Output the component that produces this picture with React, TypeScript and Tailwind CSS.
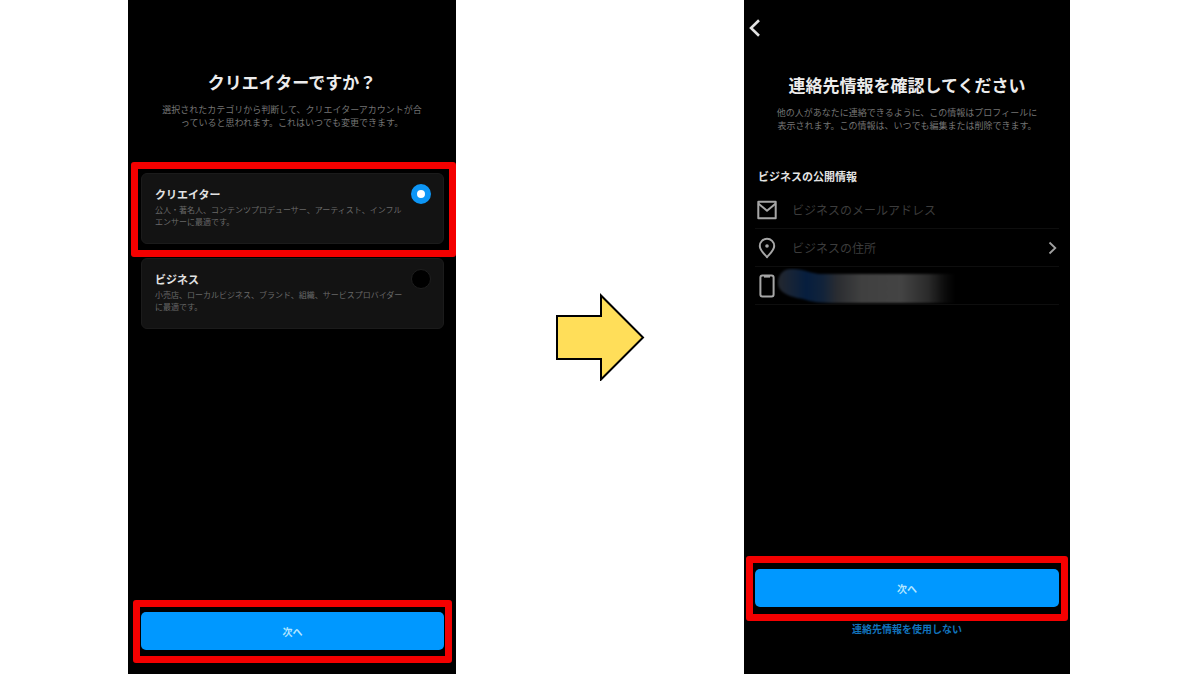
import { useState } from "react";
import type { ReactNode } from "react";

const accountTypes = [
  {
    id: "creator",
    title: "クリエイター",
    lines: ["公人・著名人、コンテンツプロデューサー、アーティスト、インフル", "エンサーに最適です。"],
  },
  {
    id: "business",
    title: "ビジネス",
    lines: ["小売店、ローカルビジネス、ブランド、組織、サービスプロバイダー", "に最適です。"],
  },
];

function Heading({ title, lines }: { title: string; lines: string[] }) {
  return (
    <header className="text-center whitespace-nowrap">
      <h1 className="text-[17px] leading-6 font-bold text-[#ececec]">{title}</h1>
      <p className="mt-[9px] text-[9px] leading-[13px] text-[#747474]">
        {lines[0]}
        <br />
        {lines[1]}
      </p>
    </header>
  );
}

function NextButton() {
  return (
    <button
      type="button"
      className="block h-[38px] w-full rounded-[5px] bg-[#0098ff] text-[10px] font-bold text-[#b4e6ff]"
    >
      次へ
    </button>
  );
}

type AccountOptionProps = {
  id: string;
  title: string;
  lines: string[];
  checked: boolean;
  onSelect: () => void;
};

function AccountOption({ id, title, lines, checked, onSelect }: AccountOptionProps) {
  return (
    <label
      htmlFor={id}
      className="flex items-start justify-between rounded-md border border-[#1b1b1b] bg-[#131313] pt-2.5 pr-3 pb-[15px] pl-[13px]"
    >
      <span className="pt-0.5 whitespace-nowrap">
        <span className="block text-[11px] leading-4 font-bold text-[#e2e2e2]">{title}</span>
        <span className="mt-0.5 block text-[8px] leading-3 text-[#696969]">
          {lines[0]}
          <br />
          {lines[1]}
        </span>
      </span>
      <input
        id={id}
        type="radio"
        name="account"
        checked={checked}
        onChange={onSelect}
        className="size-5 shrink-0 appearance-none rounded-full border border-[#1e1e1e] bg-black checked:border-[6px] checked:border-[#0d96f6] checked:bg-white"
      />
    </label>
  );
}

function AccountScreen() {
  const [selected, setSelected] = useState("creator");
  const [creator, business] = accountTypes;

  return (
    <section className="flex flex-col bg-black pt-[70px] pb-[11px]">
      <Heading
        title="クリエイターですか？"
        lines={[
          "選択されたカテゴリから判断して、クリエイターアカウントが合",
          "っていると思われます。これはいつでも変更できます。",
        ]}
      />
      <div className="mt-[33px] ml-[3px] rounded-[3px] border-[7px] border-[#f40000] pt-1 pr-[5px] pb-1.5 pl-[3px]">
        <AccountOption
          {...creator}
          checked={selected === creator.id}
          onSelect={() => setSelected(creator.id)}
        />
      </div>
      <div className="mt-px mr-3 ml-[13px]">
        <AccountOption
          {...business}
          checked={selected === business.id}
          onSelect={() => setSelected(business.id)}
        />
      </div>
      <div className="mt-auto mr-1 ml-[5px] rounded-[3px] border-[7px] border-[#f40000] px-px pt-[5px] pb-1.5">
        <NextButton />
      </div>
    </section>
  );
}

function InfoRow({ icon, children }: { icon: ReactNode; children: ReactNode }) {
  return (
    <li className="flex h-[38px] items-center border-b border-[#0e0e0e] pl-0.5">
      <svg
        viewBox="0 0 20 24"
        className="h-6 w-5 shrink-0"
        fill="none"
        stroke="#a6a6a6"
        strokeWidth="2"
        strokeLinejoin="round"
        aria-hidden="true"
      >
        {icon}
      </svg>
      {children}
    </li>
  );
}

// phone number hidden under a soft brush stroke
function HiddenNumber() {
  return (
    <svg viewBox="0 0 184 36" className="h-9 w-[184px]" role="img" aria-label="電話番号">
      <defs>
        <linearGradient id="brush" x1="0" x2="184" y1="0" y2="0" gradientUnits="userSpaceOnUse">
          <stop offset="0" stopColor="#24272d" />
          <stop offset="0.07" stopColor="#182436" />
          <stop offset="0.16" stopColor="#061e3e" />
          <stop offset="0.25" stopColor="#12233a" />
          <stop offset="0.33" stopColor="#2b2d31" />
          <stop offset="0.46" stopColor="#404040" />
          <stop offset="0.67" stopColor="#444444" />
          <stop offset="0.82" stopColor="#2b2b2b" />
          <stop offset="0.91" stopColor="#0c0c0c" />
          <stop offset="0.97" stopColor="#000000" />
        </linearGradient>
        <filter id="soft" x="-5%" y="-15%" width="110%" height="130%" colorInterpolationFilters="sRGB">
          <feGaussianBlur stdDeviation="1" />
        </filter>
      </defs>
      <path
        d="M14 1C25 0 33 6 46 6H184V35H60C42 35 35 34 26 31C14 29 1 25 1 15C1 7 6 1 14 1Z"
        fill="url(#brush)"
        filter="url(#soft)"
      />
    </svg>
  );
}

function ContactScreen() {
  return (
    <section className="flex flex-col bg-black pt-[19px] pb-[37px]">
      <button type="button" aria-label="戻る" className="ml-[5px] w-[11px]">
        <svg viewBox="0 0 11 18" className="block h-[18px] w-[11px]" fill="none" stroke="#e2e2e2" strokeWidth="2.6">
          <path d="M10 1.2L2 9L10 16.8" />
        </svg>
      </button>
      <div className="mt-9">
        <Heading
          title="連絡先情報を確認してください"
          lines={[
            "他の人があなたに連絡できるように、この情報はプロフィールに",
            "表示されます。この情報は、いつでも編集または削除できます。",
          ]}
        />
      </div>
      <h2 className="mt-9 ml-3.5 text-[11px] leading-4 font-bold text-[#e4e4e4]">
        ビジネスの公開情報
      </h2>
      <ul className="mx-[11px] mt-[7px]">
        <InfoRow
          icon={
            <>
              <path d="M1.3 3.8H18.7V20.2H1.3Z" />
              <path d="M1.3 5.5L10 12.7L18.7 5.5" />
            </>
          }
        >
          <input
            type="email"
            aria-label="ビジネスのメールアドレス"
            placeholder="ビジネスのメールアドレス"
            className="ml-[15px] min-w-0 flex-1 bg-transparent text-xs text-[#a6a6a6] outline-none placeholder:text-[#3c3c3c]"
          />
        </InfoRow>
        <InfoRow
          icon={
            <>
              <path d="M10 21.2C8.6 19 2.8 14.6 2.8 10A7.2 7.2 0 0 1 17.2 10C17.2 14.6 11.4 19 10 21.2Z" />
              <circle cx="10" cy="10" r="1.8" fill="#a6a6a6" stroke="none" />
            </>
          }
        >
          <button type="button" className="ml-[15px] flex flex-1 items-center justify-between pr-0.5 text-xs text-[#3c3c3c]">
            ビジネスの住所
            <svg viewBox="0 0 9 14" className="h-3.5 w-[9px]" fill="none" stroke="#a0a0a0" strokeWidth="1.8" aria-hidden="true">
              <path d="M1.5 1.5L7.3 7L1.5 12.5" />
            </svg>
          </button>
        </InfoRow>
        <InfoRow
          icon={
            <>
              <rect x="3.4" y="1.4" width="13.2" height="21.2" rx="2" />
              <path d="M7 2.6H13" />
            </>
          }
        >
          <HiddenNumber />
        </InfoRow>
      </ul>
      <div className="mx-0.5 mt-auto rounded-[3px] border-[7px] border-[#f40000] px-0.5 pt-1.5 pb-[7px]">
        <NextButton />
      </div>
      <a href="#skip" className="text-center text-[10px] leading-4 font-bold text-[#1272bb]">
        連絡先情報を使用しない
      </a>
    </section>
  );
}

export default function App() {
  return (
    <main
      lang="ja"
      className="grid min-h-screen grid-cols-[328fr_288fr_326fr] bg-white pr-[130px] pb-px pl-32 font-['Noto_Sans_CJK_JP',sans-serif]"
    >
      <AccountScreen />
      <div className="flex items-center justify-center">
        <svg viewBox="0 0 90 88" className="h-[88px] w-[90px]" aria-hidden="true">
          <path
            d="M2 23H46V2.5L88 44.5L46 86.5V66H2Z"
            fill="#ffde59"
            stroke="#000000"
            strokeWidth="2"
          />
        </svg>
      </div>
      <ContactScreen />
    </main>
  );
}
